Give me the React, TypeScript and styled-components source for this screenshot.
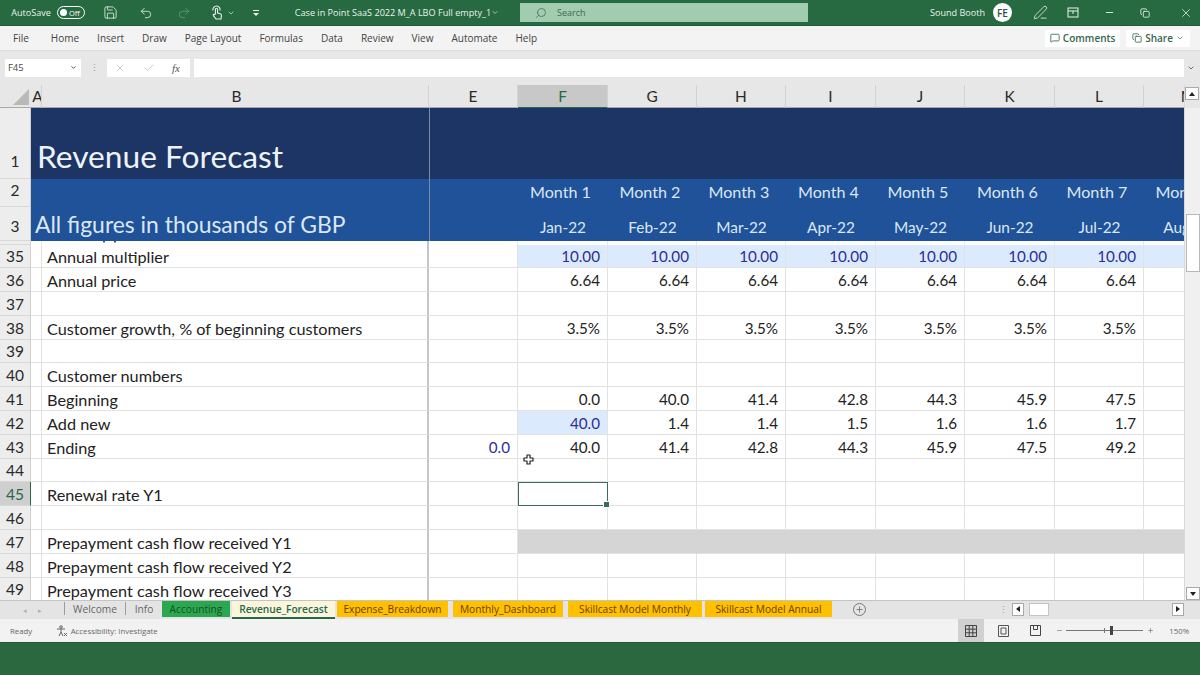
import React from "react";
import styled, { createGlobalStyle } from "styled-components";
import { Save, Undo2, Redo2, ChevronDown, Search as SearchIcon, PenLine, Minus, Copy, X, Check, MessageSquare, Plus } from "lucide-react";

const Global = createGlobalStyle`
  * { box-sizing: border-box; }
  html, body { margin: 0; padding: 0; background: #2b6840; }
  #root { width: 1200px; height: 675px; overflow: hidden; }
`;

const UI = `"Open Sans", "Noto Sans", sans-serif`;
const CELL = `Lato, "Open Sans", sans-serif`;
const COLS = "31px 11px 387px 89px 90px 89px 89px 90px 89px 90px 89px 89px";

const Page = styled.div`
  width: 1200px; height: 675px; display: flex; flex-direction: column; font-family: ${UI}; background: #2b6840;
`;
const TitleBar = styled.div`
  height: 26px; flex: none; display: flex; align-items: center; background: #276a41; color: #e8f2ec; font-size: 9.1px; border-bottom: 1px solid #1f5a36;
`;
const Slot = styled.div<{ $x: number; $w: number; $dim?: boolean }>`
  flex: none; width: ${p => p.$w}px; margin-left: ${p => p.$x}px; display: flex; align-items: center; justify-content: center; white-space: nowrap;
  opacity: ${p => (p.$dim ? 0.35 : 1)};
`;
const Toggle = styled.div`
  width: 28px; height: 13px; border: 1px solid #fff; border-radius: 7px; display: flex; align-items: center; padding-left: 2px; gap: 2px; font-size: 7.5px; color: #fff;
  &::before { content: ""; width: 7px; height: 7px; border-radius: 50%; background: #fff; }
`;
const SearchBox = styled.div`
  width: 288px; height: 19px; margin-left: 21px; flex: none; background: #a2ccb0; color: #3d6b50; display: flex; align-items: center; padding-left: 15px; gap: 10px; font-size: 9px;
`;
const MirrorSearch = styled(SearchIcon)`
  transform: scaleX(-1);
`;
const Avatar = styled.div`
  width: 19px; height: 19px; border-radius: 50%; background: #fff; color: #2f4f3e; font-size: 10px; font-weight: 600; display: flex; align-items: center; justify-content: center; margin-left: 8px; flex: none;
`;
const Ribbon = styled.div`
  height: 25px; flex: none; background: #f3f3f3; display: flex; align-items: center; padding-left: 13px; font-size: 10px; color: #444; border-bottom: 1px solid #dcdcdc;
`;
const RibbonTab = styled.span<{ $gap?: number }>`
  margin-right: ${p => p.$gap ?? 18}px; white-space: nowrap;
`;
const RibbonAction = styled.div<{ $w: number; $ml: number }>`
  width: ${p => p.$w}px; height: 17px; margin-left: ${p => p.$ml}px; background: #fff; display: flex; align-items: center; justify-content: center; gap: 3px; color: #33664c; font-weight: 600; font-size: 10px; flex: none;
`;
const FormulaBar = styled.div`
  height: 34px; flex: none; background: #e7e7e7; display: flex; align-items: center; padding: 0 0 1px 5px;
`;
const NameBox = styled.div`
  width: 76px; height: 18px; background: #fff; display: flex; align-items: center; justify-content: space-between; padding: 0 4px 0 3px; font-size: 9.4px; color: #444; flex: none;
`;
const Grip = styled.div`
  width: 26px; flex: none; text-align: center; color: #999; font-size: 9px; line-height: 1;
`;
const FxBox = styled.div`
  width: 83px; height: 18px; background: #fff; display: flex; align-items: center; padding-left: 7px; gap: 17px; flex: none; color: #b4b4b4;
`;
const Fx = styled.span`
  font-family: "Liberation Serif", serif; font-style: italic; font-size: 11px; color: #555;
`;
const FormulaInput = styled.div`
  width: 990px; height: 18px; margin-left: 4px; background: #fff; flex: none;
`;
const SheetArea = styled.div`
  height: 515px; flex: none; display: flex; background: #fff;
`;
const Sheet = styled.div`
  width: 1184px; height: 515px; overflow: hidden; flex: none; font-family: ${CELL}; color: #222; font-size: 15.2px;
`;
const Row = styled.div<{ $h: number }>`
  display: grid; grid-template-columns: ${COLS}; width: 1233px; height: ${p => p.$h}px;
`;
const ColHead = styled.div<{ $active?: boolean; $nudge?: number }>`
  background: ${p => (p.$active ? "#c8c8c8" : "#e7e7e7")}; color: ${p => (p.$active ? "#27684a" : "#2a2a2a")};
  border-right: 1px solid #d2d2d2;
  border-bottom: 1px solid ${p => (p.$active ? "#27684a" : "#a9a9a9")};
  padding-left: ${p => p.$nudge ?? 0}px;
  display: flex; align-items: center; justify-content: center; font-size: 15.4px; overflow: hidden;
`;
const Corner = styled.div`
  background: #e7e7e7; border-bottom: 1px solid #a9a9a9; position: relative;
  &::after { content: ""; position: absolute; right: 2px; bottom: 2px; border-style: solid; border-width: 0 0 16px 16px; border-color: transparent transparent #b9b9b9 transparent; }
`;
const RowHead = styled.div<{ $active?: boolean; $pb?: number }>`
  background: ${p => (p.$active ? "#cfcfcf" : "#ededed")}; color: ${p => (p.$active ? "#27684a" : "#2a2a2a")};
  border-right: 1px solid ${p => (p.$active ? "#27684a" : "#cfcfcf")}; border-bottom: 1px solid #d8d8d8;
  display: flex; align-items: flex-end; justify-content: center; padding-bottom: ${p => p.$pb ?? 1}px; font-size: 15.5px; line-height: 20px;
`;
const Band = styled.div<{ $bg: string; $span?: number; $sep?: boolean }>`
  background: ${p => p.$bg}; grid-column: span ${p => p.$span ?? 1}; color: #dbe7f5; white-space: nowrap; overflow: hidden;
  border-left: ${p => (p.$sep ? "1px solid #7d8aa0" : "none")};
`;
const Title = styled(Band)`
  font-size: 31.7px; padding: 25px 0 0 6px; line-height: 46px; color: #eef3f8;
`;
const Subtitle = styled(Band)`
  font-size: 22.9px; line-height: 30px; padding: 2px 0 0 4px; color: #dbe7f5;
`;
const HeadCell = styled(Band)<{ $month?: boolean }>`
  font-size: ${p => (p.$month ? 16.1 : 15.4)}px; display: flex; align-items: center; justify-content: center;
  padding: ${p => (p.$month ? "0 5px 4px 0" : "6px 0 0 0")};
`;
const Cell = styled.div<{ $tone?: "input" | "gray"; $blue?: boolean; $selected?: boolean }>`
  background: ${p => (p.$tone === "input" ? "#dbeafc" : p.$tone === "gray" ? "#d5d5d5" : "#fff")};
  color: ${p => (p.$blue ? "#2d2d96" : "#222")};
  border-bottom: 1px solid #e2e2e2;
  border-right: 1px solid ${p => (p.$tone === "gray" ? "#d5d5d5" : "#e2e2e2")};
  display: flex; align-items: center; justify-content: flex-end; padding: 1px 7px 0 0; white-space: nowrap; position: relative;
  ${p => p.$selected && `outline: 1.5px solid #3a6d58; outline-offset: -1px; z-index: 1;
    &::after { content: ""; position: absolute; right: -3px; bottom: -3px; width: 5px; height: 5px; background: #3a6d58; border: 1px solid #fff; }`}
`;
const LabelCell = styled(Cell)`
  justify-content: flex-start; padding: 2px 0 0 5px; border-right: 2px solid #c6c6c6; overflow: hidden; font-size: 16.25px;
`;
const PeekRow = styled(Row)`
  overflow: hidden;
`;
const PeekCell = styled.div<{ $wide?: boolean }>`
  background: #fff; border-right: ${p => (p.$wide ? "2px solid #c6c6c6" : "1px solid #e8e8e8")};
  display: flex; align-items: flex-start; padding-left: 61px;
`;
const PeekBlank = styled.div`
  background: #fff; border-right: 1px solid #e8e8e8;
`;
const Cursor = styled.svg`
  position: absolute; left: 5px; top: -5px; z-index: 2;
`;
const Scroll = styled.div`
  width: 16px; flex: none; background: #f0f0f0; display: flex; flex-direction: column; align-items: flex-end; border-left: 1px solid #dadada;
`;
const ScrollHead = styled.div`
  width: 15px; height: 23px; background: #e7e7e7; display: flex; padding: 2px 0 0 0;
`;
const ScrollBtn = styled.div<{ $down?: boolean }>`
  width: 14px; height: 13px; background: #fff; border: 1px solid #aaa; display: flex; align-items: center; justify-content: center; flex: none;
  &::before { content: ""; border-left: 3px solid transparent; border-right: 3px solid transparent;
    ${p => (p.$down ? "border-top: 4px solid #222;" : "border-bottom: 4px solid #222;")} }
`;
const ScrollThumb = styled.div`
  width: 14px; height: 58px; margin-top: 106px; background: #fff; border: 1px solid #b8b8b8; flex: none;
`;
const ScrollFill = styled.div`
  flex: 1;
`;
const TabBar = styled.div`
  height: 19px; flex: none; background: #e4e4e4; display: flex; align-items: stretch; font-size: 10.2px; border-top: 1px solid #c4c4c4;
`;
const TabNav = styled.div`
  width: 64px; flex: none; display: flex; align-items: center; justify-content: flex-end; padding-right: 22px; gap: 11px; color: #b0b0b0; font-size: 7px;
`;
const Sep = styled.div`
  width: 1px; background: #9c9c9c; margin: 1px 0 4px; flex: none;
`;
const SheetTab = styled.div<{ $w: number; $kind: "plain" | "green" | "orange" | "active"; $ml?: number }>`
  width: ${p => p.$w}px; margin-left: ${p => p.$ml ?? 0}px; flex: none; display: flex; align-items: center; justify-content: center; white-space: nowrap; height: ${p => (p.$kind === "active" ? "18px" : "16px")}; padding-bottom: 1px;
  background: ${p => ({ plain: "transparent", green: "#2ba84f", orange: "#ffc000", active: "#fbf5dc" }[p.$kind])};
  color: ${p => ({ plain: "#666", green: "#1a4f2a", orange: "#6d3c00", active: "#27684a" }[p.$kind])};
  font-weight: ${p => (p.$kind === "active" ? 600 : 400)};
  border-bottom: ${p => (p.$kind === "active" ? "2px solid #27684a" : "none")};
`;
const AddSheet = styled.div`
  width: 13px; height: 13px; margin: 2px 0 0 21px; border: 1px solid #777; border-radius: 50%; display: flex; align-items: center; justify-content: center; flex: none; color: #666;
`;
const HScroll = styled.div`
  margin-left: 133px; display: flex; align-items: center; flex: none; height: 16px; color: #999;
`;
const HBtn = styled.div<{ $right?: boolean }>`
  width: 12px; height: 13px; background: #fff; border: 1px solid #aaa; display: flex; align-items: center; justify-content: center; flex: none;
  &::before { content: ""; border-top: 3px solid transparent; border-bottom: 3px solid transparent;
    ${p => (p.$right ? "border-left: 4px solid #222;" : "border-right: 4px solid #222;")} }
`;
const HThumb = styled.div`
  width: 20px; height: 13px; margin: 0 123px 0 5px; background: #fff; border: 1px solid #c4c4c4; flex: none;
`;
const HDots = styled.span`
  width: 13px; font-size: 9px; line-height: 1; flex: none;
`;
const StatusBar = styled.div`
  height: 24px; flex: none; background: #f2f2f2; display: flex; align-items: center; padding-left: 10px; font-size: 7.8px; color: #666; border-bottom: 1px solid #1f5a36;
`;
const ViewBtn = styled.div<{ $on?: boolean; $w: number; $ml?: number }>`
  width: ${p => p.$w}px; height: 23px; margin-left: ${p => p.$ml ?? 0}px; background: ${p => (p.$on ? "#d0d0d0" : "transparent")}; display: flex; align-items: center; justify-content: center; flex: none; color: #555;
`;
const Zoomer = styled.div`
  width: 77px; height: 1px; margin: 0 3px; background: #777; position: relative; flex: none;
  &::before { content: ""; position: absolute; left: 38px; top: -2px; width: 1px; height: 5px; background: #777; }
  &::after { content: ""; position: absolute; left: 44px; top: -4px; width: 3px; height: 9px; background: #444; }
`;
const Footer = styled.div`
  flex: 1; background: #2b6840;
`;

const months = ["Month 1", "Month 2", "Month 3", "Month 4", "Month 5", "Month 6", "Month 7", "Month 8"];
const dates = ["Jan-22", "Feb-22", "Mar-22", "Apr-22", "May-22", "Jun-22", "Jul-22", "Aug-22"];
const headers: [string, number?][] = [["A", 3], ["B", 3], ["E"], ["F"], ["G"], ["H"], ["I"], ["J"], ["K"], ["L"], ["M"]];

type RowData = {
  n: number; label?: string; e?: string; vals?: string[]; tone?: "input" | "gray"; blue?: boolean; firstInput?: boolean; cursor?: boolean; selected?: boolean;
};
const rows: RowData[] = [
  { n: 35, label: "Annual multiplier", vals: Array(7).fill("10.00"), tone: "input", blue: true },
  { n: 36, label: "Annual price", vals: Array(7).fill("6.64") },
  { n: 37 },
  { n: 38, label: "Customer growth, % of beginning customers", vals: Array(7).fill("3.5%") },
  { n: 39 },
  { n: 40, label: "Customer numbers" },
  { n: 41, label: "Beginning", vals: ["0.0", "40.0", "41.4", "42.8", "44.3", "45.9", "47.5"] },
  { n: 42, label: "Add new", vals: ["40.0", "1.4", "1.4", "1.5", "1.6", "1.6", "1.7"], firstInput: true },
  { n: 43, label: "Ending", e: "0.0", vals: ["40.0", "41.4", "42.8", "44.3", "45.9", "47.5", "49.2"] },
  { n: 44, cursor: true },
  { n: 45, label: "Renewal rate Y1", selected: true },
  { n: 46 },
  { n: 47, label: "Prepayment cash flow received Y1", tone: "gray" },
  { n: 48, label: "Prepayment cash flow received Y2" },
  { n: 49, label: "Prepayment cash flow received Y3" },
];

const RowView = ({ r }: { r: RowData }) => (
  <Row $h={23.8}>
    <RowHead $active={r.selected}>{r.n}</RowHead>
    <Cell />
    <LabelCell>{r.label}</LabelCell>
    <Cell $blue>{r.e}</Cell>
    {Array.from({ length: 8 }, (_, i) => (
      <Cell
        key={i}
        $tone={r.tone ?? (r.firstInput && i === 0 ? "input" : undefined)}
        $blue={r.blue || (r.firstInput && i === 0)}
        $selected={r.selected && i === 0}
      >
        {r.vals?.[i]}
        {r.cursor && i === 0 && (
          <Cursor width="11" height="11" viewBox="0 0 11 11">
            <path d="M4 1h3v3h3v3H7v3H4V7H1V4h3z" fill="#fff" stroke="#222" strokeWidth="1.2" strokeLinejoin="round" />
          </Cursor>
        )}
      </Cell>
    ))}
  </Row>
);

export default function App() {
  return (
    <Page>
      <Global />
      <TitleBar>
        <Slot $x={11} $w={40}>AutoSave</Slot>
        <Slot $x={6} $w={28}><Toggle>Off</Toggle></Slot>
        <Slot $x={17} $w={16}><Save size={15} strokeWidth={1.3} /></Slot>
        <Slot $x={20} $w={16}><Undo2 size={14} strokeWidth={1.4} /></Slot>
        <Slot $x={22} $w={16} $dim><Redo2 size={14} strokeWidth={1.4} /></Slot>
        <Slot $x={18} $w={14}>
          <svg width="12" height="16" viewBox="0 0 12 16" fill="none" stroke="currentColor" strokeWidth="1.1">
            <path d="M2 5.5a3.6 3.6 0 1 1 7 0" />
            <path d="M4.4 9V4.4a1.1 1.1 0 0 1 2.2 0V8l2.6.8c1 .3 1.4 1 1.2 2L10 14H5L2.4 10.6c-.5-.8.5-1.7 1.2-1z" />
          </svg>
        </Slot>
        <Slot $x={2} $w={10}><ChevronDown size={8} /></Slot>
        <Slot $x={15} $w={10}>
          <svg width="8" height="8" viewBox="0 0 8 8" fill="currentColor"><path d="M1 1h6v1H1zM1 4h6L4 7z" /></svg>
        </Slot>
        <Slot $x={34} $w={196}>Case in Point SaaS 2022 M_A LBO Full empty_1</Slot>
        <Slot $x={0} $w={8}><ChevronDown size={9} /></Slot>
        <SearchBox><MirrorSearch size={12} strokeWidth={1.5} />Search</SearchBox>
        <Slot $x={122} $w={55}>Sound Booth</Slot>
        <Avatar>FE</Avatar>
        <Slot $x={20} $w={16}><PenLine size={15} strokeWidth={1.3} /></Slot>
        <Slot $x={17} $w={16}>
          <svg width="12" height="11" viewBox="0 0 12 11" fill="none" stroke="currentColor"><rect x="1" y="1" width="10" height="9" /><path d="M1 4h10M6 4v3" /></svg>
        </Slot>
        <Slot $x={22} $w={12}><Minus size={11} /></Slot>
        <Slot $x={24} $w={12}><Copy size={10} /></Slot>
        <Slot $x={28} $w={14}><X size={14} strokeWidth={1.3} /></Slot>
      </TitleBar>
      <Ribbon>
        <RibbonTab $gap={22}>File</RibbonTab>
        {["Home", "Insert", "Draw", "Page Layout", "Formulas", "Data", "Review", "View", "Automate", "Help"].map(t => (
          <RibbonTab key={t}>{t}</RibbonTab>
        ))}
        <RibbonAction $w={75} $ml={490}><MessageSquare size={10} />Comments</RibbonAction>
        <RibbonAction $w={64} $ml={6}><Copy size={10} />Share<ChevronDown size={8} /></RibbonAction>
      </Ribbon>
      <FormulaBar>
        <NameBox>F45<ChevronDown size={7} strokeWidth={3} /></NameBox>
        <Grip>⋮</Grip>
        <FxBox><X size={12} strokeWidth={1.3} /><Check size={12} strokeWidth={1.3} /><Fx>fx</Fx></FxBox>
        <FormulaInput />
        <Slot $x={2} $w={10}><ChevronDown size={8} strokeWidth={2.5} color="#555" /></Slot>
      </FormulaBar>
      <SheetArea>
        <Sheet>
          <Row $h={23}>
            <Corner />
            {headers.map(([h, nudge]) => (
              <ColHead key={h} $active={h === "F"} $nudge={nudge}>{h}</ColHead>
            ))}
          </Row>
          <Row $h={71}>
            <RowHead $pb={7}>1</RowHead>
            <Title $bg="#1c3564" $span={2}>Revenue Forecast</Title>
            <Band $bg="#1c3564" $span={9} $sep />
          </Row>
          <Row $h={28}>
            <RowHead $pb={6}>2</RowHead>
            <Band $bg="#1f5299" $span={2} />
            <Band $bg="#1f5299" $sep />
            {months.map(m => <HeadCell key={m} $bg="#1f5299" $month>{m}</HeadCell>)}
          </Row>
          <Row $h={34}>
            <RowHead $pb={4}>3</RowHead>
            <Subtitle $bg="#1f5299" $span={2}>All figures in thousands of GBP</Subtitle>
            <Band $bg="#1f5299" $sep />
            {dates.map(d => <HeadCell key={d} $bg="#1f5299">{d}</HeadCell>)}
          </Row>
          <PeekRow $h={3.5}>
            <RowHead />
            <PeekBlank />
            <PeekCell $wide>
              <svg width="14" height="2" viewBox="0 0 14 2"><path d="M0 0h2v1.5H0zM11 0h2v1.5h-2z" fill="#555" /></svg>
            </PeekCell>
            {Array.from({ length: 9 }, (_, i) => <PeekBlank key={i} />)}
          </PeekRow>
          {rows.map(r => <RowView key={r.n} r={r} />)}
        </Sheet>
        <Scroll>
          <ScrollHead><ScrollBtn /></ScrollHead>
          <ScrollThumb />
          <ScrollFill />
          <ScrollBtn $down />
        </Scroll>
      </SheetArea>
      <TabBar>
        <TabNav><span>◂</span><span>▸</span></TabNav>
        <Sep />
        <SheetTab $w={60} $kind="plain">Welcome</SheetTab>
        <Sep />
        <SheetTab $w={36} $kind="plain">Info</SheetTab>
        <SheetTab $w={68} $kind="green">Accounting</SheetTab>
        <SheetTab $w={103} $ml={2} $kind="active">Revenue_Forecast</SheetTab>
        <SheetTab $w={111} $ml={2} $kind="orange">Expense_Breakdown</SheetTab>
        <SheetTab $w={110} $ml={5} $kind="orange">Monthly_Dashboard</SheetTab>
        <SheetTab $w={134} $ml={5} $kind="orange">Skillcast Model Monthly</SheetTab>
        <SheetTab $w={127} $ml={3} $kind="orange">Skillcast Model Annual</SheetTab>
        <AddSheet><Plus size={9} /></AddSheet>
        <HScroll><HDots>⋮</HDots><HBtn /><HThumb /><HBtn $right /></HScroll>
      </TabBar>
      <StatusBar>
        <span>Ready</span>
        <Slot $x={23} $w={13}>
          <svg width="12" height="12" viewBox="0 0 12 12" fill="none" stroke="#666" strokeWidth="1"><circle cx="5" cy="2" r="1.3" /><path d="M1 4h8M5 4v3L3 11M5 7l2 4M8 8l3 3M11 8l-3 3" /></svg>
        </Slot>
        <Slot $x={3} $w={86}>Accessibility: Investigate</Slot>
        <ViewBtn $on $w={26} $ml={801}>
          <svg width="12" height="12" viewBox="0 0 12 12" fill="none" stroke="#444"><path d="M.5.5h11v11H.5zM4.2.5v11M7.8.5v11M.5 4.2h11M.5 7.8h11" /></svg>
        </ViewBtn>
        <ViewBtn $w={11} $ml={14}>
          <svg width="11" height="12" viewBox="0 0 11 12" fill="none" stroke="#555"><path d="M.5.5h10v11H.5zM3 3h5v6H3z" /></svg>
        </ViewBtn>
        <ViewBtn $w={11} $ml={21}>
          <svg width="11" height="11" viewBox="0 0 11 11" fill="none" stroke="#444"><path d="M.5.5h10v10H.5zM3.5.5v4h4v-4" /></svg>
        </ViewBtn>
        <Slot $x={14} $w={8}><Minus size={7} /></Slot>
        <Zoomer />
        <Slot $x={0} $w={8}><Plus size={7} /></Slot>
        <Slot $x={14} $w={22}>150%</Slot>
      </StatusBar>
      <Footer />
    </Page>
  );
}
